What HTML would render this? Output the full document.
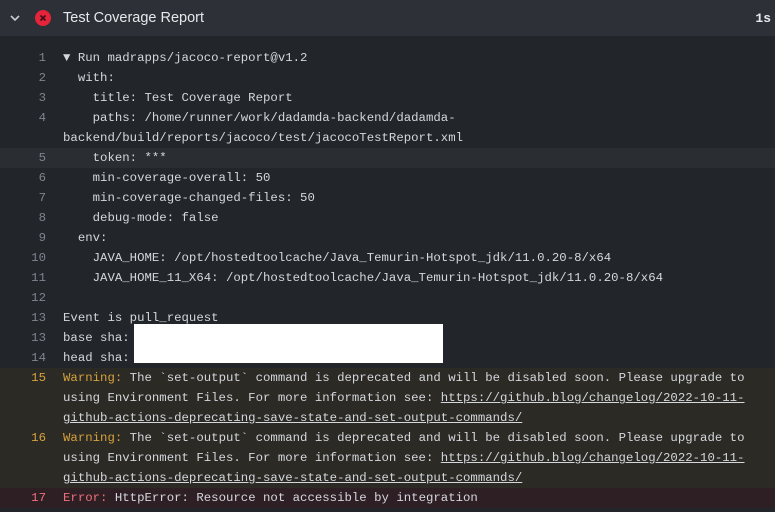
<!DOCTYPE html>
<html><head><style>
body{margin:0;width:775px;height:512px;background:#22252a;overflow:hidden;font-family:"Liberation Mono",monospace;}
.hdr{height:36px;background:#2d3036;position:relative;color:#e6e8eb;font-family:"Liberation Sans",sans-serif;}
.hdr .t{position:absolute;left:63px;top:10px;font-size:14.5px;}
.hdr .s{position:absolute;right:4px;top:11px;font-size:13px;font-family:"Liberation Mono",monospace;font-weight:bold;}
.log{position:absolute;top:48px;left:0;width:775px;}
.r{height:20px;line-height:20px;font-size:12.35px;color:#d4d7dc;white-space:pre;position:relative;}
.n{position:absolute;left:0;width:46px;text-align:right;color:#7d8590;}
.c{position:absolute;left:63px;}
.w{background:#2b2a25}.e{background:#2e1f25}.h{background:#2a2d32}
.wn{color:#d6a23c}.er{color:#f0707a}
.y .n{color:#d6a23c}.x .n{color:#f0707a}
u{text-decoration:underline}
</style></head><body>
<div class="hdr">
<svg style="position:absolute;left:9px;top:12px" width="12" height="12" viewBox="0 0 12 12"><path d="M2 4l4 4 4-4" stroke="#c9ccd1" stroke-width="1.6" fill="none"/></svg>
<svg style="position:absolute;left:35px;top:10px" width="16" height="16" viewBox="0 0 16 16"><circle cx="8" cy="8" r="8" fill="#e5243b"/><path d="M5.5 5.5l5 5M10.5 5.5l-5 5" stroke="#3a1016" stroke-width="1.6"/></svg>
<span class="t">Test Coverage Report</span><span class="s">1s</span>
</div>
<div class="log">
<div class="r"><span class="n">1</span><span class="c">▼ Run madrapps/jacoco-report@v1.2</span></div>
<div class="r"><span class="n">2</span><span class="c">  with:</span></div>
<div class="r"><span class="n">3</span><span class="c">    title: Test Coverage Report</span></div>
<div class="r"><span class="n">4</span><span class="c">    paths: /home/runner/work/dadamda-backend/dadamda-</span></div>
<div class="r"><span class="c">backend/build/reports/jacoco/test/jacocoTestReport.xml</span></div>
<div class="r h"><span class="n">5</span><span class="c">    token: ***</span></div>
<div class="r"><span class="n">6</span><span class="c">    min-coverage-overall: 50</span></div>
<div class="r"><span class="n">7</span><span class="c">    min-coverage-changed-files: 50</span></div>
<div class="r"><span class="n">8</span><span class="c">    debug-mode: false</span></div>
<div class="r"><span class="n">9</span><span class="c">  env:</span></div>
<div class="r"><span class="n">10</span><span class="c">    JAVA_HOME: /opt/hostedtoolcache/Java_Temurin-Hotspot_jdk/11.0.20-8/x64</span></div>
<div class="r"><span class="n">11</span><span class="c">    JAVA_HOME_11_X64: /opt/hostedtoolcache/Java_Temurin-Hotspot_jdk/11.0.20-8/x64</span></div>
<div class="r"><span class="n">12</span></div>
<div class="r"><span class="n">13</span><span class="c">Event is pull_request</span></div>
<div class="r"><span class="n">13</span><span class="c">base sha:</span></div>
<div class="r"><span class="n">14</span><span class="c">head sha:</span></div>
<div class="r w y"><span class="n">15</span><span class="c"><span class="wn">Warning:</span> The `set-output` command is deprecated and will be disabled soon. Please upgrade to</span></div>
<div class="r w"><span class="c">using Environment Files. For more information see: <u>https://github.blog/changelog/2022-10-11-</u></span></div>
<div class="r w"><span class="c"><u>github-actions-deprecating-save-state-and-set-output-commands/</u></span></div>
<div class="r w y"><span class="n">16</span><span class="c"><span class="wn">Warning:</span> The `set-output` command is deprecated and will be disabled soon. Please upgrade to</span></div>
<div class="r w"><span class="c">using Environment Files. For more information see: <u>https://github.blog/changelog/2022-10-11-</u></span></div>
<div class="r w"><span class="c"><u>github-actions-deprecating-save-state-and-set-output-commands/</u></span></div>
<div class="r e x"><span class="n">17</span><span class="c"><span class="er">Error:</span> HttpError: Resource not accessible by integration</span></div>
</div>
<div style="position:absolute;left:134px;top:324px;width:309px;height:39px;background:#fff"></div>
</body></html>
